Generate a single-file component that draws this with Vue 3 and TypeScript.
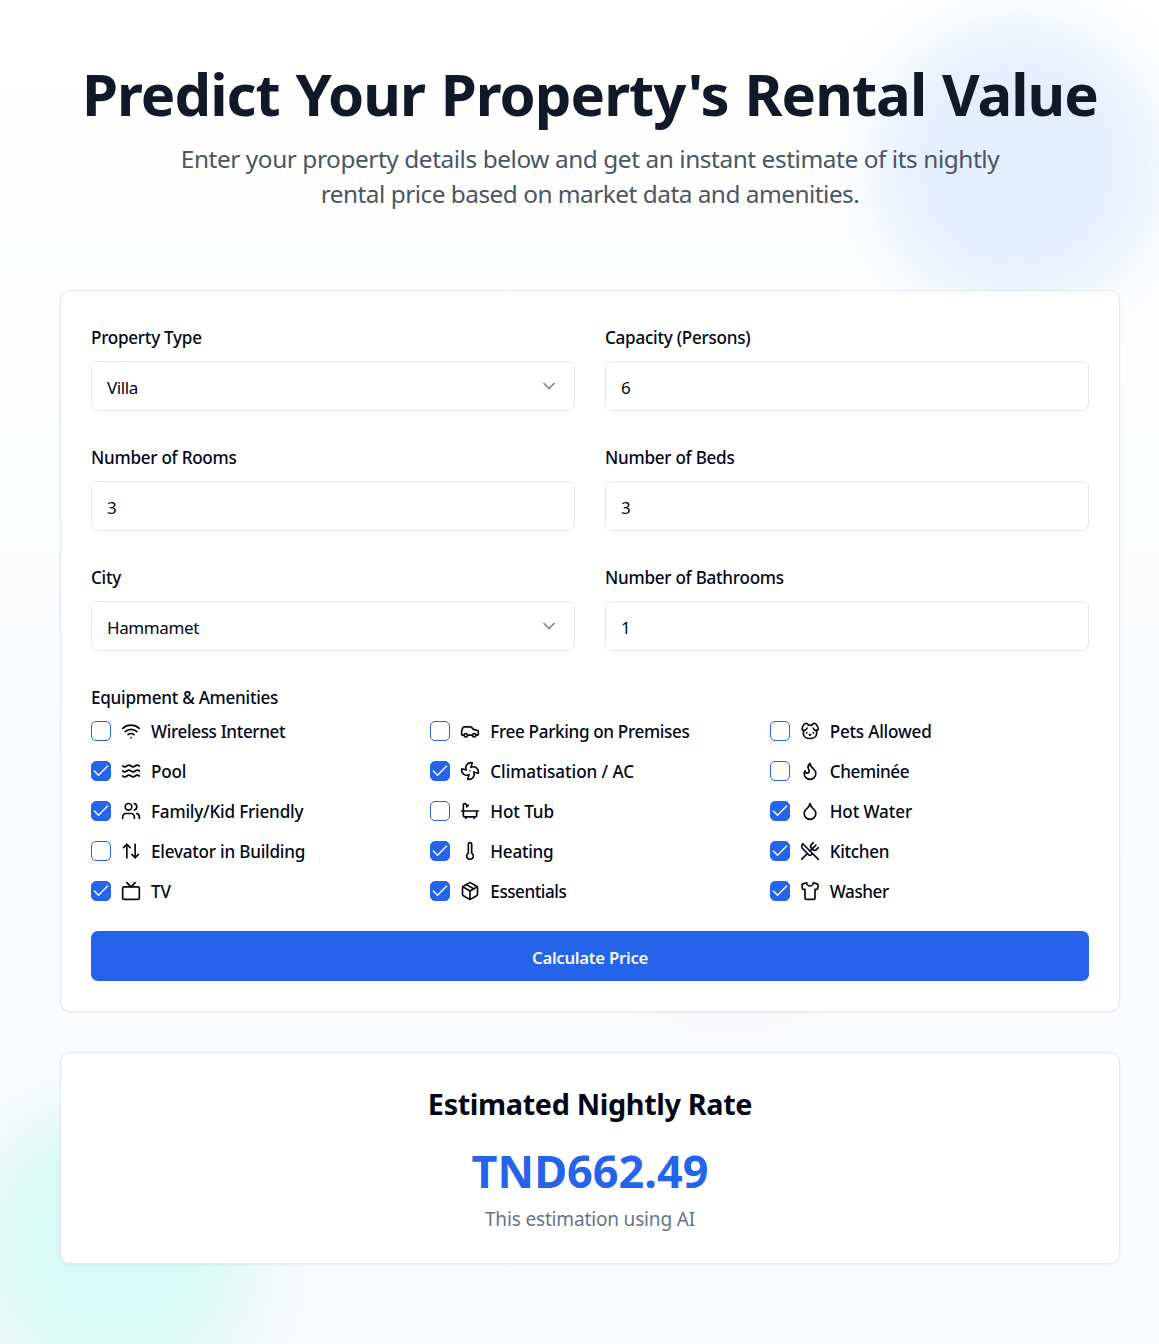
<script setup lang="ts">
interface Field {
  label: string
  value: string
  select?: boolean
}

interface Amenity {
  label: string
  tracking: number
  icon: string[]
  checked?: boolean
}

const fields: Field[] = [
  { label: 'Property Type', value: 'Villa', select: true },
  { label: 'Capacity (Persons)', value: '6' },
  { label: 'Number of Rooms', value: '3' },
  { label: 'Number of Beds', value: '3' },
  { label: 'City', value: 'Hammamet', select: true },
  { label: 'Number of Bathrooms', value: '1' },
]

const amenities: Amenity[] = [
  {
    label: 'Wireless Internet',
    tracking: -0.36,
    icon: ['M12 20h.01', 'M2 8.82a15 15 0 0 1 20 0', 'M5 12.859a10 10 0 0 1 14 0', 'M8.5 16.429a5 5 0 0 1 7 0'],
  },
  {
    label: 'Free Parking on Premises',
    tracking: -0.34,
    icon: [
      'M19 17h2c.6 0 1-.4 1-1v-3c0-.9-.7-1.7-1.5-1.9C18.7 10.6 16 10 16 10s-1.3-1.4-2.2-2.3c-.5-.4-1.1-.7-1.8-.7H5c-.6 0-1.1.4-1.4.9l-1.4 2.9A3.7 3.7 0 0 0 2 12v4c0 .6.4 1 1 1h2',
      'M5 17a2 2 0 1 0 4 0a2 2 0 1 0-4 0',
      'M9 17h6',
      'M15 17a2 2 0 1 0 4 0a2 2 0 1 0-4 0',
    ],
  },
  {
    label: 'Pets Allowed',
    tracking: -0.2,
    icon: [
      'M10 5.172C10 3.782 8.423 2.679 6.5 3c-2.823.47-4.113 6.006-4 7 .08.703 1.725 1.722 3.656 1 1.261-.472 1.96-1.45 2.344-2.5',
      'M14.267 5.172c0-1.39 1.577-2.493 3.5-2.172 2.823.47 4.113 6.006 4 7-.08.703-1.725 1.722-3.656 1-1.261-.472-1.855-1.45-2.239-2.5',
      'M8 14v.5',
      'M16 14v.5',
      'M11.25 16.25h1.5L12 17l-.75-.75Z',
      'M4.42 11.247A13.152 13.152 0 0 0 4 14.556C4 18.728 7.582 21 12 21s8-2.272 8-6.444c0-1.061-.162-2.2-.493-3.309m-9.243-6.082A8.801 8.801 0 0 1 12 5c.78 0 1.5.108 2.161.306',
    ],
  },
  {
    label: 'Pool',
    tracking: -0.15,
    checked: true,
    icon: [
      'M2 6c.6.5 1.2 1 2.5 1C7 7 7 5 9.5 5c2.6 0 2.4 2 5 2 2.5 0 2.5-2 5-2 1.3 0 1.9.5 2.5 1',
      'M2 12c.6.5 1.2 1 2.5 1 2.5 0 2.5-2 5-2 2.6 0 2.4 2 5 2 2.5 0 2.5-2 5-2 1.3 0 1.9.5 2.5 1',
      'M2 18c.6.5 1.2 1 2.5 1 2.5 0 2.5-2 5-2 2.6 0 2.4 2 5 2 2.5 0 2.5-2 5-2 1.3 0 1.9.5 2.5 1',
    ],
  },
  {
    label: 'Climatisation / AC',
    tracking: -0.06,
    checked: true,
    icon: [
      'M10.827 16.379a6.082 6.082 0 0 1-8.618-7.002l5.412 1.45a6.082 6.082 0 0 1 7.002-8.618l-1.45 5.412a6.082 6.082 0 0 1 8.618 7.002l-5.412-1.45a6.082 6.082 0 0 1-7.002 8.618l1.45-5.412Z',
      'M12 12v.01',
    ],
  },
  {
    label: 'Cheminée',
    tracking: -0.37,
    icon: [
      'M8.5 14.5A2.5 2.5 0 0 0 11 12c0-1.38-.5-2-1-3-1.072-2.143-.224-4.054 2-6 .5 2.5 2 4.9 4 6.5 2 1.6 3 3.5 3 5.5a7 7 0 1 1-14 0c0-1.153.433-2.294 1-3a2.5 2.5 0 0 0 2.5 2.5z',
    ],
  },
  {
    label: 'Family/Kid Friendly',
    tracking: -0.19,
    checked: true,
    icon: [
      'M16 21v-2a4 4 0 0 0-4-4H6a4 4 0 0 0-4 4v2',
      'M5 7a4 4 0 1 0 8 0a4 4 0 1 0-8 0',
      'M22 21v-2a4 4 0 0 0-3-3.87',
      'M16 3.13a4 4 0 0 1 0 7.75',
    ],
  },
  {
    label: 'Hot Tub',
    tracking: -0.1,
    icon: [
      'M9 6 6.5 3.5a1.5 1.5 0 0 0-1-.5C4.683 3 4 3.683 4 4.5V17a2 2 0 0 0 2 2h12a2 2 0 0 0 2-2v-5',
      'M10 5 8 7',
      'M2 12h20',
      'M7 19v2',
      'M17 19v2',
    ],
  },
  {
    label: 'Hot Water',
    tracking: -0.1,
    checked: true,
    icon: [
      'M12 22a7 7 0 0 0 7-7c0-2-1-3.9-3-5.5s-3.5-4-4-6.5c-.5 2.5-2 4.9-4 6.5C6 11.1 5 13 5 15a7 7 0 0 0 7 7z',
    ],
  },
  {
    label: 'Elevator in Building',
    tracking: -0.22,
    icon: ['m21 16-4 4-4-4', 'M17 20V4', 'm3 8 4-4 4 4', 'M7 4v16'],
  },
  {
    label: 'Heating',
    tracking: -0.27,
    checked: true,
    icon: ['M14 4v10.54a4 4 0 1 1-4 0V4a2 2 0 0 1 4 0Z'],
  },
  {
    label: 'Kitchen',
    tracking: -0.3,
    checked: true,
    icon: [
      'm16 2-2.3 2.3a3 3 0 0 0 0 4.2l1.8 1.8a3 3 0 0 0 4.2 0L22 8',
      'M15 15 3.3 3.3a4.2 4.2 0 0 0 0 6l7.3 7.3c.7.7 2 .7 2.8 0L15 15Zm0 0 7 7',
      'm2.1 21.8 6.4-6.3',
      'm19 5-7 7',
    ],
  },
  {
    label: 'TV',
    tracking: 0,
    checked: true,
    icon: ['M4 7h16a2 2 0 0 1 2 2v11a2 2 0 0 1-2 2H4a2 2 0 0 1-2-2V9a2 2 0 0 1 2-2Z', 'm17 2-5 5-5-5'],
  },
  {
    label: 'Essentials',
    tracking: -0.46,
    checked: true,
    icon: [
      'M11 21.73a2 2 0 0 0 2 0l7-4A2 2 0 0 0 21 16V8a2 2 0 0 0-1-1.73l-7-4a2 2 0 0 0-2 0l-7 4A2 2 0 0 0 3 8v8a2 2 0 0 0 1 1.73z',
      'M12 22V12',
      'M3.3 7 12 12l8.7-5',
      'm7.5 4.27 9 5.15',
    ],
  },
  {
    label: 'Washer',
    tracking: -0.4,
    checked: true,
    icon: [
      'M20.38 3.46 16 2a4 4 0 0 1-8 0L3.62 3.46a2 2 0 0 0-1.34 2.23l.58 3.47a1 1 0 0 0 .99.84H6v10c0 1.1.9 2 2 2h8a2 2 0 0 0 2-2V10h2.15a1 1 0 0 0 .99-.84l.58-3.47a2 2 0 0 0-1.34-2.23z',
    ],
  },
]
</script>

<template>
  <main class="page">
    <div class="blob blob-blue"></div>
    <div class="blob blob-green"></div>
    <div class="blob blob-violet"></div>

    <header class="hero">
      <h1>Predict Your Property's Rental Value</h1>
      <p>
        <span class="line-one">Enter your property details below and get an instant estimate of its nightly</span><br />
        <span class="line-two">rental price based on market data and amenities.</span>
      </p>
    </header>

    <form class="card form" @submit.prevent>
      <div class="fields">
        <div v-for="f in fields" :key="f.label" class="field">
          <div class="label">{{ f.label }}</div>
          <div class="control">
            <span>{{ f.value }}</span>
            <svg v-if="f.select" class="chevron" viewBox="0 0 24 24"><path d="m6 9 6 6 6-6" /></svg>
          </div>
        </div>
      </div>
      <div class="label">Equipment &amp; Amenities</div>
      <div class="amenities">
        <div v-for="a in amenities" :key="a.label" class="amenity">
          <span class="box" :class="{ on: a.checked }">
            <svg v-if="a.checked" viewBox="0 0 24 24"><path d="M20 6 9 17l-5-5" /></svg>
          </span>
          <svg class="icon" viewBox="0 0 24 24"><path v-for="d in a.icon" :key="d" :d="d" /></svg>
          <span class="name" :style="{ letterSpacing: a.tracking + 'px' }">{{ a.label }}</span>
        </div>
      </div>
      <button type="submit" class="submit">Calculate Price</button>
    </form>

    <section class="card result">
      <h2>Estimated Nightly Rate</h2>
      <div class="price">TND662.49</div>
      <p>This estimation using AI</p>
    </section>
  </main>
</template>

<style>
body {
  margin: 0;
}
</style>

<style scoped>
* {
  box-sizing: border-box;
}
h1,
h2,
p {
  margin: 0;
}
.page {
  position: relative;
  overflow: hidden;
  height: 1344px;
  padding: 60px 39px 0 60px;
  background: linear-gradient(to bottom, #fff, #f8fafc);
  color: #020817;
  font-family: 'Noto Sans', 'Open Sans', sans-serif;
}
.blob {
  position: absolute;
  border-radius: 50%;
  filter: blur(30px);
}
.blob-blue {
  left: 877px;
  top: 23px;
  width: 280px;
  height: 284px;
  background: #e4effe;
}
.blob-green {
  left: -27px;
  top: 1105px;
  width: 282px;
  height: 282px;
  background: #d9faf4;
}
.blob-violet {
  left: 610px;
  top: 766px;
  width: 240px;
  height: 240px;
  background: #f7f3fb;
}
.hero {
  position: relative;
  height: 230px;
  text-align: center;
  white-space: nowrap;
}
h1 {
  height: 70px;
  line-height: 68px;
  font-size: 58px;
  font-weight: 700;
  letter-spacing: -0.96px;
  word-spacing: 1.6px;
  color: #111827;
}
.hero p {
  margin-top: 11px;
  line-height: 35px;
  font-size: 24.4px;
  color: #4b5563;
}
.line-one {
  letter-spacing: -0.43px;
}
.line-two {
  letter-spacing: -0.51px;
}
.card {
  position: relative;
  border: 1px solid #e2e8f0;
  border-radius: 10px;
  background: #fff;
  box-shadow: 0 1px 3px rgba(0, 0, 0, 0.05);
}
.form {
  height: 722px;
  padding: 30px;
}
.fields {
  display: grid;
  grid-template-columns: 1fr 1fr;
  gap: 20px 30px;
}
.field {
  height: 100px;
}
.label {
  height: 30px;
  line-height: 34px;
  font-size: 17.1px;
  font-weight: 500;
  letter-spacing: -0.26px;
}
.field .control {
  margin-top: 10px;
}
.control {
  display: flex;
  align-items: center;
  justify-content: space-between;
  height: 50px;
  padding: 2px 15px 0;
  border: 1px solid #e2e8f0;
  border-radius: 7px;
  font-size: 17px;
  font-weight: 400;
  letter-spacing: -0.4px;
}
svg {
  fill: none;
  stroke: currentColor;
  stroke-width: 2;
  stroke-linecap: round;
  stroke-linejoin: round;
}
.chevron {
  width: 20px;
  height: 20px;
  margin-top: -2px;
  opacity: 0.5;
}
.fields + .label {
  margin-top: 20px;
}
.amenities {
  display: grid;
  grid-template-columns: repeat(3, 1fr);
  gap: 20px;
  padding-top: 10px;
}
.amenity {
  display: flex;
  align-items: center;
  gap: 10px;
  height: 20px;
}
.box {
  flex: none;
  width: 20px;
  height: 20px;
  border: 1px solid #2563eb;
  border-radius: 5px;
  color: #f8fafc;
}
.box.on {
  background: #2563eb;
}
.box svg {
  display: block;
  width: 20px;
  height: 20px;
  margin: -1px;
  stroke-width: 1.7;
}
.icon {
  flex: none;
  width: 20px;
  height: 20px;
}
.name {
  line-height: 20px;
  padding-top: 2px;
  font-size: 17.1px;
  font-weight: 500;
  white-space: nowrap;
}
.submit {
  display: block;
  width: 100%;
  height: 50px;
  margin-top: 30px;
  padding: 2px 0 0;
  border: 0;
  border-radius: 7px;
  background: #2563eb;
  color: #f8fafc;
  font: 600 16.8px 'Noto Sans', sans-serif;
  letter-spacing: -0.3px;
}
.result {
  height: 212px;
  margin-top: 40px;
  padding-top: 31px;
  text-align: center;
}
h2 {
  height: 40px;
  line-height: 40px;
  font-size: 28.8px;
  font-weight: 700;
  letter-spacing: -0.36px;
}
.price {
  margin-top: 20px;
  height: 50px;
  line-height: 54px;
  font-size: 45px;
  font-weight: 700;
  color: #2563eb;
}
.result p {
  margin-top: 10px;
  line-height: 30px;
  font-size: 19px;
  letter-spacing: -0.16px;
  color: #64748b;
}
</style>
